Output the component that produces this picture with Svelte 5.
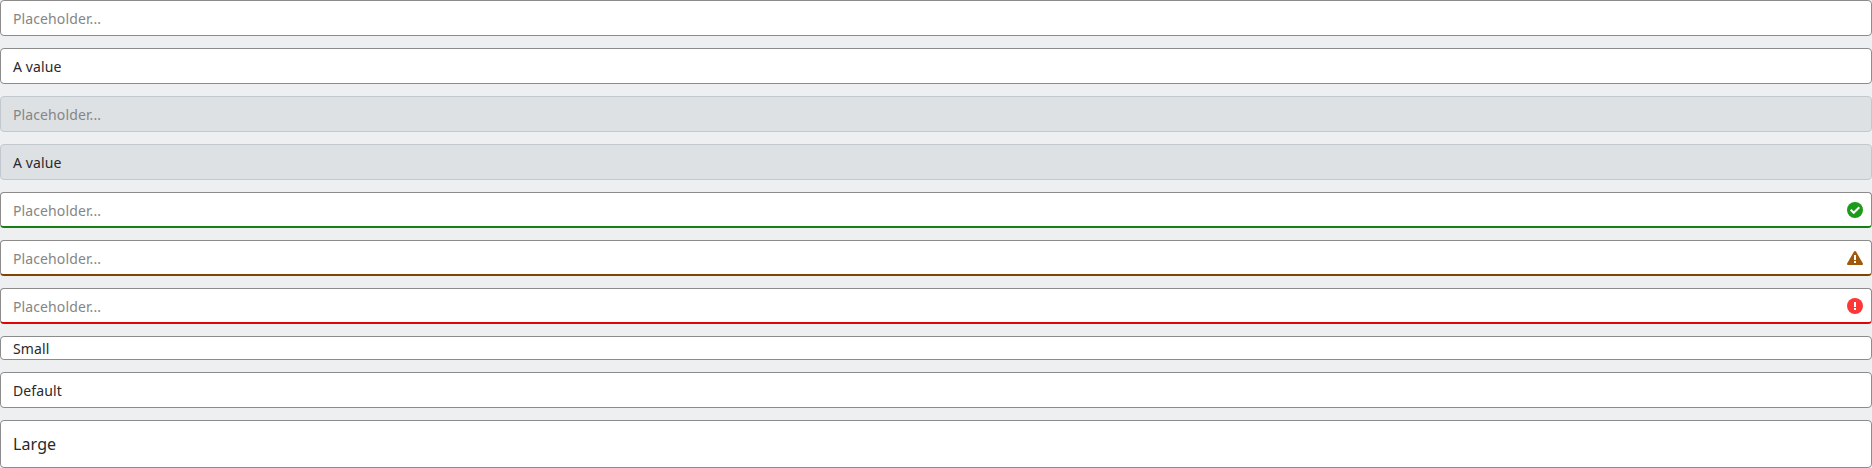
<script>
  const fields = [
    { placeholder: 'Placeholder...' },
    { value: 'A value' },
    { placeholder: 'Placeholder...', disabled: true },
    { value: 'A value', disabled: true },
    { placeholder: 'Placeholder...', status: 'success' },
    { placeholder: 'Placeholder...', status: 'warning' },
    { placeholder: 'Placeholder...', status: 'error' },
    { value: 'Small', size: 'small' },
    { value: 'Default' },
    { value: 'Large', size: 'large' }
  ];
</script>

<div class="stack">
  {#each fields as f}
    <div class="field {f.size ?? ''} {f.status ?? ''}" class:disabled={f.disabled}>
      <span class="text" class:placeholder={f.placeholder}>{f.placeholder ?? f.value}</span>
      {#if f.status === 'success'}
        <svg viewBox="0 0 16 16"><circle cx="8" cy="8" r="8" fill="#1e9a1b" /><path d="M3.7 7.8l3 3 5.6-5.6" fill="none" stroke="#fff" stroke-width="2" /></svg>
      {:else if f.status === 'warning'}
        <svg viewBox="0 0 16 16"><path d="M7 1.5a1.15 1.15 0 0 1 2 0l6.9 12.1a.95.95 0 0 1-.9 1.4H1a.95.95 0 0 1-.9-1.4z" fill="#a05a0a" /><path d="M7 5h2v5H7zM7 11h2v2H7z" fill="#fff" /></svg>
      {:else if f.status === 'error'}
        <svg viewBox="0 0 16 16"><circle cx="8" cy="8" r="8" fill="#ff3636" /><path d="M7 4h2v5H7zM7 10h2v2H7z" fill="#fff" /></svg>
      {/if}
    </div>
  {/each}
</div>

<style>
  :global(body) {
    background: #eeeff1;
  }
  .stack {
    display: flex;
    flex-direction: column;
    gap: 12px;
  }
  .field {
    box-sizing: border-box;
    height: 36px;
    display: flex;
    align-items: center;
    justify-content: space-between;
    padding: 0 8px 0 12px;
    border: 1px solid #8c8c8c;
    border-radius: 4px;
    background: #fff;
    color: #292929;
    font: 14px/20px "Noto Sans", sans-serif;
    letter-spacing: 0.11px;
  }
  .text {
    padding-top: 2px;
  }
  .placeholder {
    color: #858585;
  }
  .disabled {
    background: #dde1e4;
    border-color: #c2c9ce;
  }
  .small {
    height: 24px;
  }
  .large {
    height: 48px;
    font-size: 16px;
    line-height: 24px;
  }
  .large .text {
    padding-top: 0;
  }
  .success,
  .warning,
  .error {
    padding-top: 1px;
    border-bottom-width: 2px;
  }
  .success {
    border-bottom-color: #148012;
  }
  .warning {
    border-bottom-color: #804600;
  }
  .error {
    border-bottom-color: #e00505;
  }
  svg {
    width: 16px;
    height: 16px;
    display: block;
  }
</style>
